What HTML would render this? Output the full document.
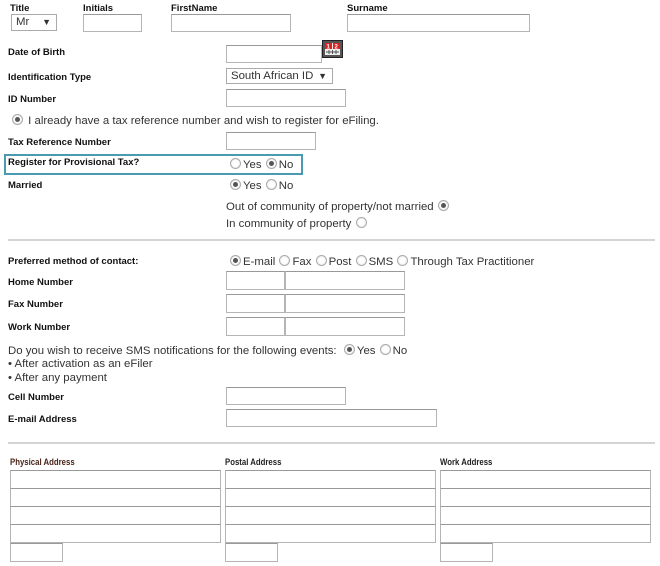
<!DOCTYPE html><html><head><meta charset="utf-8"><style>
body{margin:0;width:660px;height:566px;background:#fff;position:relative;font-family:"Liberation Sans",Arial,sans-serif;color:#222;overflow:hidden}
.a{position:absolute;white-space:nowrap}
.l{position:absolute;font-size:9.5px;font-weight:bold;line-height:12px;white-space:nowrap;color:#111;margin-top:2px}
.t{position:absolute;font-size:11.4px;line-height:14px;white-space:nowrap;color:#333;margin-top:1px}
.i{position:absolute;box-sizing:border-box;border:1px solid #b5b5b5;border-top-color:#999;background:#fff}
.r{display:inline-block;width:9px;height:9px;border:1px solid #aaa;border-radius:50%;background:radial-gradient(circle,#fff 40%,#ddd);vertical-align:-1px;margin:0 2px 0 1px;position:relative}
.r.c::after{content:"";position:absolute;left:2px;top:2px;width:5px;height:5px;border-radius:50%;background:#555}
.hr{position:absolute;left:8px;width:647px;height:2px;background:#d4d4d4}
.sel{position:absolute;box-sizing:border-box;border:1px solid #aaa;background:#fff;font-size:11.4px;line-height:15px;padding-left:4px;color:#333}
.sel b{position:absolute;right:5px;top:0;font-size:9px}
.al{position:absolute;font-size:9.5px;font-weight:bold;line-height:12px;white-space:nowrap;color:#222;transform:scaleX(0.82);transform-origin:0 0;margin-top:1px}
</style></head><body>
<div class="l" style="left:10px;top:1px">Title</div>
<div class="l" style="left:83px;top:1px">Initials</div>
<div class="l" style="left:171px;top:1px">FirstName</div>
<div class="l" style="left:347px;top:1px">Surname</div>
<div class="sel" style="left:11px;top:14px;width:46px;height:17px">Mr<b>▼</b></div>
<div class="i" style="left:83px;top:14px;width:59px;height:18px"></div>
<div class="i" style="left:171px;top:14px;width:120px;height:18px"></div>
<div class="i" style="left:347px;top:14px;width:183px;height:18px"></div>

<div class="l" style="left:8px;top:45px">Date of Birth</div>
<div class="i" style="left:226px;top:45px;width:96px;height:18px"></div>
<svg class="a" style="left:322px;top:40px" width="21" height="18" viewBox="0 0 21 18"><rect x="0.5" y="0.5" width="20" height="17" fill="#555" stroke="#222"/><rect x="3" y="3" width="15" height="12" fill="#eee"/><rect x="3" y="3" width="7" height="6" fill="#d22"/><rect x="11" y="3" width="7" height="6" fill="#d22"/><text x="4.5" y="8.5" font-size="6" fill="#fff" font-family="Liberation Sans" font-weight="bold">1</text><text x="12.5" y="8.5" font-size="6" fill="#fff" font-family="Liberation Sans" font-weight="bold">2</text><path d="M4 12h13M7 10v4M10.5 10v4M14 10v4" stroke="#555" stroke-width="1"/></svg>
<div class="l" style="left:8px;top:70px">Identification Type</div>
<div class="sel" style="left:226px;top:68px;width:107px;height:16px">South African ID<b>▼</b></div>
<div class="l" style="left:8px;top:92px">ID Number</div>
<div class="i" style="left:226px;top:89px;width:120px;height:18px"></div>
<div class="t" style="left:11px;top:113px"><span class="r c"></span> I already have a tax reference number and wish to register for eFiling.</div>
<div class="l" style="left:8px;top:135px">Tax Reference Number</div>
<div class="i" style="left:226px;top:132px;width:90px;height:18px"></div>
<div class="a" style="left:4px;top:154px;width:295px;height:17px;border:2px solid #4a9ab0"></div>
<div class="l" style="left:8px;top:155px">Register for Provisional Tax?</div>
<div class="t" style="left:229px;top:157px"><span class="r"></span>Yes <span class="r c"></span>No</div>
<div class="l" style="left:8px;top:178px">Married</div>
<div class="t" style="left:229px;top:178px"><span class="r c"></span>Yes <span class="r"></span>No</div>
<div class="t" style="left:226px;top:199px">Out of community of property/not married <span class="r c"></span></div>
<div class="t" style="left:226px;top:216px">In community of property <span class="r"></span></div>
<div class="hr" style="top:239px"></div>

<div class="l" style="left:8px;top:254px">Preferred method of contact:</div>
<div class="t" style="left:229px;top:254px"><span class="r c"></span>E-mail <span class="r"></span>Fax <span class="r"></span>Post <span class="r"></span>SMS <span class="r"></span>Through Tax Practitioner</div>
<div class="l" style="left:8px;top:275px">Home Number</div>
<div class="i" style="left:226px;top:271px;width:59px;height:19px"></div><div class="i" style="left:285px;top:271px;width:120px;height:19px"></div>
<div class="l" style="left:8px;top:297px">Fax Number</div>
<div class="i" style="left:226px;top:294px;width:59px;height:19px"></div><div class="i" style="left:285px;top:294px;width:120px;height:19px"></div>
<div class="l" style="left:8px;top:320px">Work Number</div>
<div class="i" style="left:226px;top:317px;width:59px;height:19px"></div><div class="i" style="left:285px;top:317px;width:120px;height:19px"></div>
<div class="t" style="left:8px;top:343px">Do you wish to receive SMS notifications for the following events: &nbsp;<span class="r c"></span>Yes <span class="r"></span>No</div>
<div class="t" style="left:8px;top:356px">• After activation as an eFiler</div>
<div class="t" style="left:8px;top:370px">• After any payment</div>
<div class="l" style="left:8px;top:390px">Cell Number</div>
<div class="i" style="left:226px;top:387px;width:120px;height:18px"></div>
<div class="l" style="left:8px;top:412px">E-mail Address</div>
<div class="i" style="left:226px;top:409px;width:211px;height:18px"></div>
<div class="hr" style="top:442px"></div>

<div class="al" style="left:10px;top:456px;color:#4a2418">Physical Address</div>
<div class="al" style="left:225px;top:456px">Postal Address</div>
<div class="al" style="left:440px;top:456px">Work Address</div>
<div class="i" style="left:10px;top:470px;width:211px;height:19px"></div><div class="i" style="left:10px;top:488px;width:211px;height:19px"></div><div class="i" style="left:10px;top:506px;width:211px;height:19px"></div><div class="i" style="left:10px;top:524px;width:211px;height:19px"></div><div class="i" style="left:10px;top:543px;width:53px;height:19px"></div>
<div class="i" style="left:225px;top:470px;width:211px;height:19px"></div><div class="i" style="left:225px;top:488px;width:211px;height:19px"></div><div class="i" style="left:225px;top:506px;width:211px;height:19px"></div><div class="i" style="left:225px;top:524px;width:211px;height:19px"></div><div class="i" style="left:225px;top:543px;width:53px;height:19px"></div>
<div class="i" style="left:440px;top:470px;width:211px;height:19px"></div><div class="i" style="left:440px;top:488px;width:211px;height:19px"></div><div class="i" style="left:440px;top:506px;width:211px;height:19px"></div><div class="i" style="left:440px;top:524px;width:211px;height:19px"></div><div class="i" style="left:440px;top:543px;width:53px;height:19px"></div>
</body></html>
